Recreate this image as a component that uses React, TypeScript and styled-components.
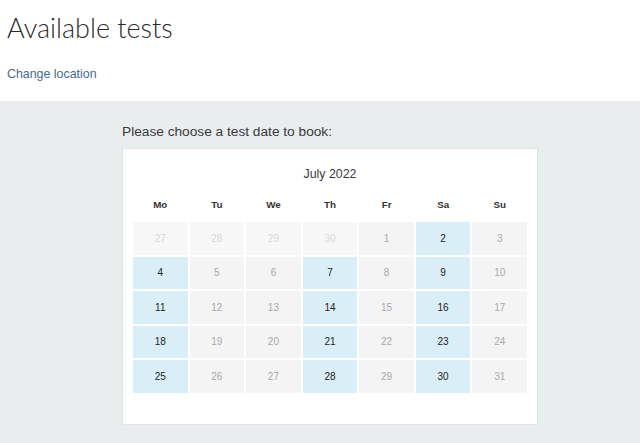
import React from "react";
import styled, { createGlobalStyle } from "styled-components";

const GlobalStyle = createGlobalStyle`
  html, body {
    margin: 0;
    padding: 0;
    background: #ffffff;
    font-family: "Liberation Sans", Arial, sans-serif;
    color: #333333;
  }
`;

const Page = styled.div`
  width: 640px;
  min-height: 443px;
  display: flex;
  flex-direction: column;
`;

const Header = styled.header`
  padding: 12px 7px 0;
  height: 101px;
  box-sizing: border-box;
`;

const Title = styled.h1`
  margin: 0;
  font-family: "Lato", "Open Sans", sans-serif;
  font-weight: 300;
  font-size: 27px;
  line-height: 32px;
  color: #2b2b2b;
`;

const LocationLink = styled.a`
  display: block;
  width: max-content;
  margin-top: 22px;
  font-size: 12.4px;
  line-height: 16px;
  color: #476a8e;
  text-decoration: none;
`;

const Body = styled.main`
  flex: 1;
  background: #e9edee;
  padding: 22px 0 18px 122px;
`;

const Prompt = styled.p`
  margin: 0 0 7px;
  font-size: 13.7px;
  line-height: 18px;
  color: #3a3a3a;
`;

const Card = styled.div`
  width: 416px;
  box-sizing: border-box;
  background: #ffffff;
  border: 1px solid #e2e5e6;
  padding: 17px 10px 31px;
`;

const MonthTitle = styled.div`
  text-align: center;
  font-size: 12.4px;
  line-height: 16px;
  color: #3a3a3a;
`;

const Grid = styled.div`
  display: grid;
  grid-template-columns: repeat(7, 1fr);
  column-gap: 2px;
  row-gap: 2px;
`;

const DayNames = styled(Grid)`
  margin-top: 17px;
  margin-bottom: 11px;
`;

const DayName = styled.div`
  text-align: center;
  font-size: 9.8px;
  font-weight: bold;
  line-height: 12px;
  color: #333333;
`;

type Kind = "outside" | "closed" | "open";

const Cell = styled.div<{ $kind: Kind }>`
  height: 32.5px;
  display: flex;
  align-items: center;
  justify-content: center;
  font-size: 10px;
  background: ${(p) =>
    p.$kind === "open" ? "#daeef8" : p.$kind === "closed" ? "#f4f4f4" : "#f7f7f7"};
  color: ${(p) =>
    p.$kind === "open" ? "#222222" : p.$kind === "closed" ? "#a9a9a9" : "#d9d9d9"};
`;

const days = ["Mo", "Tu", "We", "Th", "Fr", "Sa", "Su"];
const openDays = [2, 4, 7, 9, 11, 14, 16, 18, 21, 23, 25, 28, 30];

const cells: { day: number; kind: Kind }[] = [
  ...[27, 28, 29, 30].map((day) => ({ day, kind: "outside" as Kind })),
  ...Array.from({ length: 31 }, (_, i) => ({
    day: i + 1,
    kind: (openDays.includes(i + 1) ? "open" : "closed") as Kind,
  })),
];

const App: React.FC = () => {
  return (
    <Page>
      <GlobalStyle />
      <Header>
        <Title>Available tests</Title>
        <LocationLink href="#">Change location</LocationLink>
      </Header>
      <Body>
        <Prompt>Please choose a test date to book:</Prompt>
        <Card>
          <MonthTitle>July 2022</MonthTitle>
          <DayNames>
            {days.map((d) => (
              <DayName key={d}>{d}</DayName>
            ))}
          </DayNames>
          <Grid>
            {cells.map((c, i) => (
              <Cell key={i} $kind={c.kind}>
                {c.day}
              </Cell>
            ))}
          </Grid>
        </Card>
      </Body>
    </Page>
  );
};

export default App;
